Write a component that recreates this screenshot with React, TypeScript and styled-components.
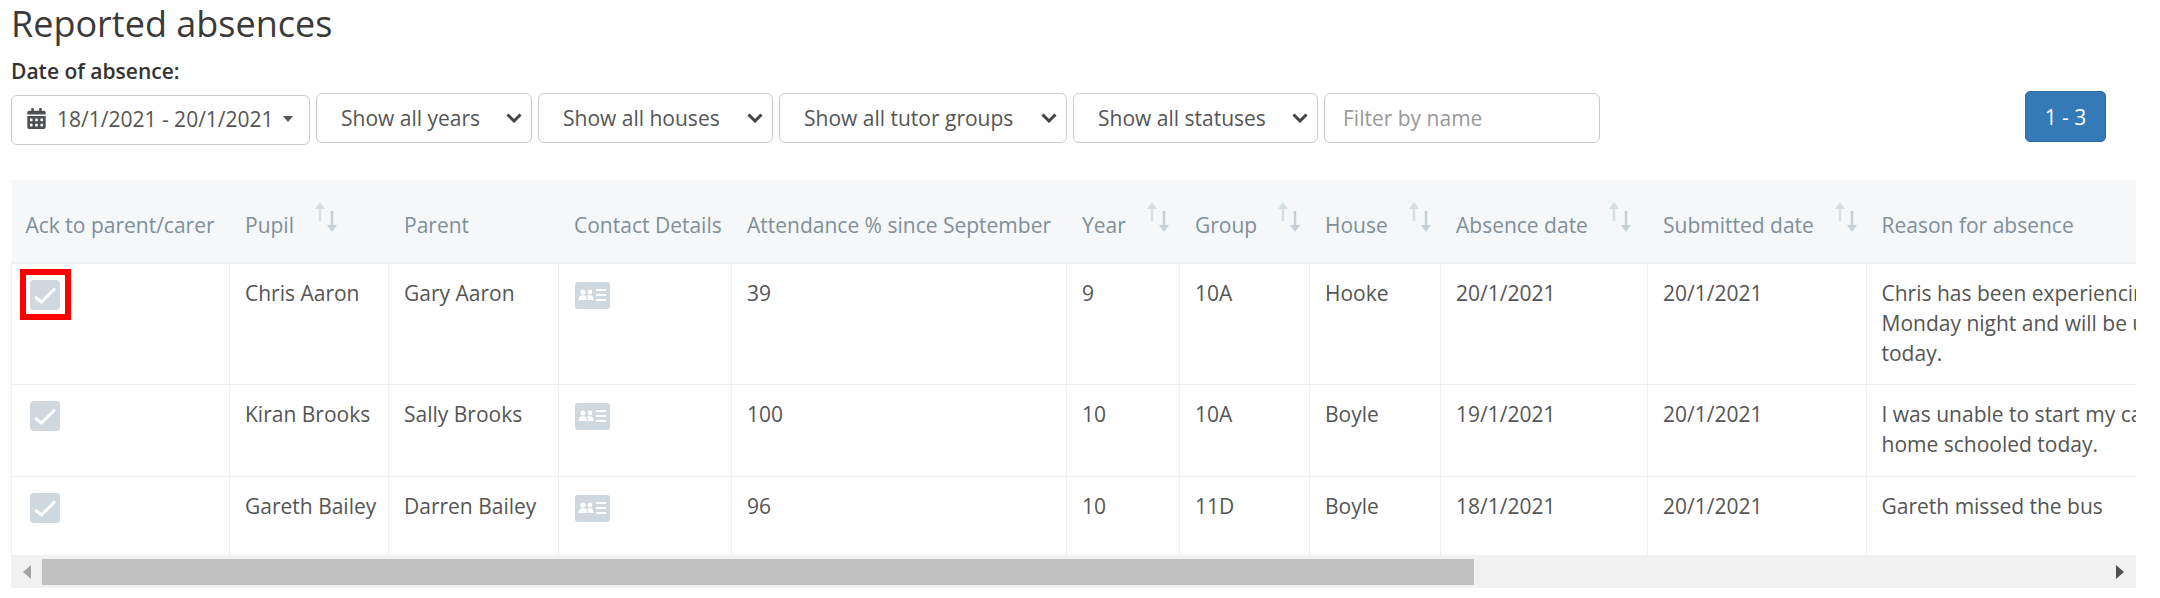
import React from 'react';
import styled, {createGlobalStyle} from 'styled-components';
import {FaCalendarAlt} from 'react-icons/fa';

type Absence = {
    pupil: string
    parent: string
    attendance: number
    year: number
    group: string
    house: string
    absenceDate: string
    submittedDate: string
    reason: string
}

const absences: Absence[] = [
    {
        pupil: 'Chris Aaron',
        parent: 'Gary Aaron',
        attendance: 39,
        year: 9,
        group: '10A',
        house: 'Hooke',
        absenceDate: '20/1/2021',
        submittedDate: '20/1/2021',
        reason: 'Chris has been experiencing stomach pains since\nMonday night and will be unable to attend school\ntoday.',
    },
    {
        pupil: 'Kiran Brooks',
        parent: 'Sally Brooks',
        attendance: 100,
        year: 10,
        group: '10A',
        house: 'Boyle',
        absenceDate: '19/1/2021',
        submittedDate: '20/1/2021',
        reason: 'I was unable to start my car this morning, so Kiran will be\nhome schooled today.',
    },
    {
        pupil: 'Gareth Bailey',
        parent: 'Darren Bailey',
        attendance: 96,
        year: 10,
        group: '11D',
        house: 'Boyle',
        absenceDate: '18/1/2021',
        submittedDate: '20/1/2021',
        reason: 'Gareth missed the bus',
    },
];

const columns = [
    {title: 'Ack to parent/carer', width: 218, sortable: false},
    {title: 'Pupil', width: 159, sortable: true},
    {title: 'Parent', width: 170, sortable: false},
    {title: 'Contact Details', width: 173, sortable: false},
    {title: 'Attendance % since September', width: 335, sortable: false},
    {title: 'Year', width: 113, sortable: true},
    {title: 'Group', width: 130, sortable: true},
    {title: 'House', width: 131, sortable: true},
    {title: 'Absence date', width: 207, sortable: true},
    {title: 'Submitted date', width: 218.5, sortable: true},
    {title: 'Reason for absence', width: 620, sortable: false},
];

const filters = [
    {label: 'Show all years', width: 216},
    {label: 'Show all houses', width: 235},
    {label: 'Show all tutor groups', width: 288},
    {label: 'Show all statuses', width: 245},
];

const SortIcon = () => (
    <SortSvg viewBox="0 0 24 30" width={24} height={30}>
        <path d="M6 19V4" stroke="#d6dfe4" strokeWidth={2.4}/>
        <path d="M6 0L11 7H1Z" fill="#d6dfe4"/>
        <path d="M18 9V26" stroke="#c5d0d6" strokeWidth={2.4}/>
        <path d="M18 30L13 23H23Z" fill="#c5d0d6"/>
    </SortSvg>
);

const CheckBox = () => (
    <CheckSvg viewBox="0 0 30 30" width={30} height={30}>
        <rect width="30" height="30" rx="4" fill="#cfd8de"/>
        <path d="M5 17L11.5 22L25 8.5" fill="none" stroke="#fff" strokeWidth={3}/>
    </CheckSvg>
);

const ContactIcon = () => (
    <svg viewBox="0 0 35 27" width={35} height={27} style={{display: 'block'}}>
        <rect width="35" height="27" rx="3" fill="#cfd8de"/>
        <circle cx="8" cy="10" r="2.6" fill="#fff"/>
        <circle cx="15" cy="10" r="2.4" fill="#fff"/>
        <path d="M3.5 18c0-3.5 2-4.8 4.5-4.8s4 1.300 4 4.800zM13 18c0-2.500-.5-3.600-1-4.400 1-.4 2-.4 3-.4 2.300 0 3.500 1.500 3.500 4.800z" fill="#fff"/>
        <path d="M21 8h10M21 13h10M21 18h10" stroke="#fff" strokeWidth={1.800}/>
    </svg>
);

export default function App() {
    return (
        <Page>
            <GlobalStyle/>
            <Title>Reported absences</Title>
            <DateLabel>Date of absence:</DateLabel>
            <FilterRow>
                <DateButton type="button">
                    <FaCalendarAlt size={21} color="#4c5054"/>
                    <span>18/1/2021 - 20/1/2021</span>
                    <Caret/>
                </DateButton>
                {filters.map(f => (
                    <SelectWrap key={f.label} $width={f.width}>
                        <FilterSelect defaultValue={f.label}>
                            <option>{f.label}</option>
                        </FilterSelect>
                        <Chevron viewBox="0 0 16 10" width={16} height={10}>
                            <path d="M1.500 1.500L8 8L14.500 1.500" fill="none" stroke="#444" strokeWidth={3}/>
                        </Chevron>
                    </SelectWrap>
                ))}
                <NameInput placeholder="Filter by name"/>
                <PageButton type="button">1 - 3</PageButton>
            </FilterRow>

            <TableScroll>
                <Table>
                    <colgroup>
                        {columns.map(c => <col key={c.title} style={{width: c.width}}/>)}
                    </colgroup>
                    <thead>
                    <tr>
                        {columns.map(c => (
                            <HeadCell key={c.title}>
                                <HeadInner>
                                    {c.title}
                                    {c.sortable && <SortIcon/>}
                                </HeadInner>
                            </HeadCell>
                        ))}
                    </tr>
                    </thead>
                    <tbody>
                    {absences.map((a, i) => (
                        <Row key={a.pupil} $height={[121, 92, 79][i]}>
                            <CheckCell>
                                <CheckBox/>
                                {i === 0 && <Highlight/>}
                            </CheckCell>
                            <Cell>{a.pupil}</Cell>
                            <Cell>{a.parent}</Cell>
                            <IconCell><ContactIcon/></IconCell>
                            <Cell>{a.attendance}</Cell>
                            <Cell>{a.year}</Cell>
                            <Cell>{a.group}</Cell>
                            <Cell>{a.house}</Cell>
                            <Cell>{a.absenceDate}</Cell>
                            <Cell>{a.submittedDate}</Cell>
                            <ReasonCell>{a.reason}</ReasonCell>
                        </Row>
                    ))}
                    </tbody>
                </Table>
            </TableScroll>
            <ScrollBar>
                <ArrowBox><ArrowLeft/></ArrowBox>
                <ScrollTrack>
                    <ScrollThumb/>
                </ScrollTrack>
                <ArrowBox><ArrowRight/></ArrowBox>
            </ScrollBar>
        </Page>
    );
}

const GlobalStyle = createGlobalStyle`
  html, body {
    margin: 0;
    padding: 0;
    background: #fff;
  }

  body {
    font-family: "Open Sans", "Liberation Sans", sans-serif;
    color: #555;
  }
`

const Page = styled.div`
  width: 2160px;
  height: 598px;
  box-sizing: border-box;
  padding: 0 24.5px 0 11px;
  overflow: hidden;
`

const Title = styled.h1`
  margin: 0;
  height: 50px;
  font-size: 36px;
  line-height: 48px;
  font-weight: 400;
  color: #3a3a3a;
`

const DateLabel = styled.label`
  display: block;
  height: 43px;
  font-size: 21px;
  line-height: 43px;
  font-weight: 600;
  color: #333;
`

const FilterRow = styled.div`
  display: flex;
  align-items: flex-start;
  gap: 6px;
  height: 87px;
`

const DateButton = styled.button`
  display: flex;
  align-items: center;
  width: 299px;
  height: 50px;
  margin-top: 2px;
  padding: 0 0 3px 14px;
  box-sizing: border-box;
  background: #fff;
  border: 1.5px solid #ccc;
  border-radius: 6px;
  font: 400 21px "Open Sans", sans-serif;
  color: #555;

  span {
    margin-left: 10px;
  }
`

const Caret = styled.i`
  width: 0;
  height: 0;
  margin-left: 9px;
  border-top: 6px solid #555;
  border-left: 5px solid transparent;
  border-right: 5px solid transparent;
`

const SelectWrap = styled.div<{ $width: number }>`
  position: relative;
  width: ${props => props.$width}px;
  height: 50px;
`

const FilterSelect = styled.select`
  width: 100%;
  height: 100%;
  padding: 0 40px 0 24px;
  box-sizing: border-box;
  appearance: none;
  background: #fff;
  border: 1.5px solid #ccc;
  border-radius: 6px;
  font: 400 21px "Open Sans", sans-serif;
  color: #555;
`

const Chevron = styled.svg`
  position: absolute;
  right: 10px;
  top: 20px;
  pointer-events: none;
`

const NameInput = styled.input`
  width: 276px;
  height: 50px;
  padding: 0 18px;
  box-sizing: border-box;
  background: #fff;
  border: 1.5px solid #ccc;
  border-radius: 6px;
  font: 400 21px "Open Sans", sans-serif;
  color: #555;

  &::placeholder {
    color: #999;
    opacity: 1;
  }
`

const PageButton = styled.button`
  width: 81px;
  height: 51px;
  margin: -2px 29.5px 0 auto;
  padding: 0;
  background: #337ab7;
  border: 1px solid #2e6da4;
  border-radius: 5px;
  font: 400 21px "Open Sans", sans-serif;
  color: #fff;
`

const TableScroll = styled.div`
  overflow: hidden;
`

const Table = styled.table`
  table-layout: fixed;
  width: 2474.5px;
  border-collapse: collapse;
`

const HeadCell = styled.th`
  height: 83px;
  padding: 8px 0 0 15.5px;
  box-sizing: border-box;
  background: #f5f7f9;
  border-bottom: 2px solid #eef1f4;
  font-size: 21px;
  font-weight: 400;
  text-align: left;
  white-space: nowrap;
  color: #7f8f9a;

  &:first-child {
    padding-left: 14px;
  }
`

const HeadInner = styled.div`
  display: flex;
  align-items: center;
`

const SortSvg = styled.svg`
  flex: none;
  margin: 0 0 16px 20px;
`

const Row = styled.tr<{ $height: number }>`
  height: ${props => props.$height}px;
`

const Cell = styled.td`
  padding: 14px 15px 0;
  vertical-align: top;
  border: 1px solid #eef1f4;
  border-bottom: 0;
  font-size: 21px;
  line-height: 30px;
  white-space: nowrap;
  color: #555;
`

const CheckCell = styled(Cell)`
  position: relative;
  padding: 16px 18px 0;
`

const IconCell = styled(Cell)`
  padding: 18px 16px 0;
`

const ReasonCell = styled(Cell)`
  white-space: pre-line;
`

const CheckSvg = styled.svg`
  display: block;
`

const Highlight = styled.div`
  position: absolute;
  left: 8px;
  top: 5px;
  width: 51px;
  height: 51px;
  box-sizing: border-box;
  border: 6px solid #f00;
`

const ScrollBar = styled.div`
  display: flex;
  align-items: stretch;
  height: 33px;
  background: #f1f1f1;
`

const ArrowBox = styled.div`
  display: flex;
  align-items: center;
  justify-content: center;
  flex: none;
  width: 31px;
`

const ArrowLeft = styled.i`
  width: 0;
  height: 0;
  border-top: 7px solid transparent;
  border-bottom: 7px solid transparent;
  border-right: 8px solid #a3a3a3;
`

const ArrowRight = styled.i`
  width: 0;
  height: 0;
  border-top: 7px solid transparent;
  border-bottom: 7px solid transparent;
  border-left: 8px solid #505050;
`

const ScrollTrack = styled.div`
  flex: 1;
  padding: 4px 0 3px;
`

const ScrollThumb = styled.div`
  width: 1432px;
  height: 100%;
  background: #c1c1c1;
`
